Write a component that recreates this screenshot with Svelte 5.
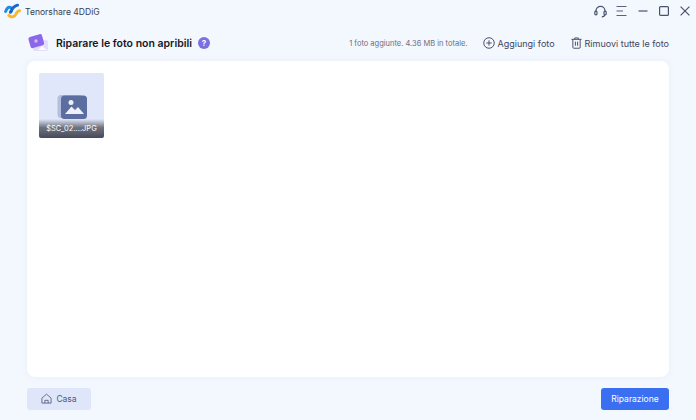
<script>
  let files = [{ name: "$SC_02....JPG" }];
</script>

<div class="window">
  <div class="titlebar">
    <div class="brand">
      <svg width="17" height="16" viewBox="0 0 17 16" fill="none">
        <path d="M1.6 8.5C2.7 5.5 4.5 3.8 6.4 4.4C8.6 5.1 8.2 8 6.4 9.3" stroke="#1f8be3" stroke-width="2.9" stroke-linecap="round"/>
        <path d="M6.6 8.8C8 5.6 10 3.2 13.6 2.2" stroke="#1667c8" stroke-width="2.9" stroke-linecap="round"/>
        <path d="M4.8 12.4C7.5 15 11 13.8 12.2 10.8C12.8 9.2 14 8 15.6 7.8" stroke="#f4b92c" stroke-width="2.9" stroke-linecap="round"/>
      </svg>
      <span class="app-name">Tenorshare 4DDiG</span>
    </div>
    <div class="controls">
      <svg class="headset" width="13" height="13" viewBox="0 0 13 13" fill="none" stroke="#4a5270" stroke-width="1.2">
        <path d="M2 7V5.8a4.5 4.5 0 0 1 9 0V7"/>
        <rect x="0.8" y="6.2" width="2.2" height="3.6" rx="1"/>
        <rect x="10" y="6.2" width="2.2" height="3.6" rx="1"/>
        <path d="M10.8 10C10.4 11.4 9.4 11.8 7.8 11.8"/>
      </svg>
      <svg width="11" height="12" viewBox="0 0 11 12" fill="none" stroke="#5a6280" stroke-width="1">
        <path d="M0.5 1.5H10.5M0.5 6H7M0.5 10.5H10.5"/>
      </svg>
      <svg width="10" height="12" viewBox="0 0 10 12" fill="none" stroke="#4a5270" stroke-width="1.2">
        <path d="M0.5 6H9.5"/>
      </svg>
      <svg width="10" height="12" viewBox="0 0 10 12" fill="none" stroke="#4a5270" stroke-width="1.2">
        <rect x="0.6" y="1.6" width="8.8" height="8.8" rx="1"/>
      </svg>
      <svg width="10" height="12" viewBox="0 0 10 12" fill="none" stroke="#4a5270" stroke-width="1.2">
        <path d="M0.6 1.6L9.4 10.4M9.4 1.6L0.6 10.4"/>
      </svg>
    </div>
  </div>

  <div class="toolbar">
    <div class="heading">
      <svg class="photo-icon" width="22" height="20" viewBox="0 0 22 20">
        <rect x="6" y="7" width="15" height="11" rx="2" fill="#e3dcfb"/>
        <rect x="2.5" y="2.5" width="14" height="11.5" rx="2" fill="#8b67e9" transform="rotate(-16 9 9)"/>
        <circle cx="9" cy="8" r="1.7" fill="#cdbdf9"/>
        <path d="M11 17L15 13L20 17Z" fill="#fff" opacity="0.9"/>
      </svg>
      <h1>Riparare le foto non apribili</h1>
      <span class="help">?</span>
    </div>
    <div class="actions">
      <span class="summary">1 foto aggiunte. 4.36 MB in totale.</span>
      <span class="action add">
        <svg width="12" height="12" viewBox="0 0 13 13" fill="none" stroke="#3f4660" stroke-width="1">
          <circle cx="6.5" cy="6.5" r="5.7"/>
          <path d="M6.5 3.6V9.4M3.6 6.5H9.4"/>
        </svg>
        Aggiungi foto
      </span>
      <span class="action">
        <svg width="11" height="12" viewBox="0 0 12 13" fill="none" stroke="#3f4660" stroke-width="1">
          <path d="M0.5 2.5H11.5M4 2.5V1H8V2.5"/>
          <path d="M2 2.5V11.2C2 11.8 2.4 12.2 3 12.2H9C9.6 12.2 10 11.8 10 11.2V2.5"/>
          <path d="M4.8 5V9.5M7.2 5V9.5"/>
        </svg>
        Rimuovi tutte le foto
      </span>
    </div>
  </div>

  <main class="card">
    {#each files as file}
      <div class="thumb">
        <div class="thumb-art">
          <svg width="30" height="25" viewBox="0 0 30 25">
            <rect x="0.5" y="1" width="25" height="23" rx="3.5" fill="#b4bedd"/>
            <rect x="4" y="1.5" width="26" height="23.5" rx="3.5" fill="#5c6da0"/>
            <circle cx="14" cy="8.5" r="2.5" fill="#eef1fb"/>
            <path d="M8 20L14.5 12.5L18 16L21 13L27 20Z" fill="#eef1fb"/>
          </svg>
        </div>
        <div class="thumb-label">{file.name}</div>
      </div>
    {/each}
  </main>

  <footer class="footer">
    <button class="home">
      <svg width="11" height="11" viewBox="0 0 12 12" fill="none" stroke="#4f5878" stroke-width="0.9">
        <path d="M1 5.6L6 1.2L11 5.6V11H1Z" stroke-linejoin="round"/>
        <path d="M4.2 11V8H7.8V11"/>
      </svg>
      Casa
    </button>
    <button class="repair">Riparazione</button>
  </footer>
</div>

<style>
  :global(body) {
    margin: 0;
    background: #f3f7fe;
  }

  .window {
    width: 696px;
    height: 420px;
    box-sizing: border-box;
    display: flex;
    flex-direction: column;
    padding: 0 27px;
    font-family: "Inter", "Liberation Sans", sans-serif;
    color: #3f4660;
    overflow: hidden;
  }

  .titlebar {
    height: 22px;
    margin: 0 -27px;
    padding: 0 6px 0 4px;
    display: flex;
    align-items: center;
    justify-content: space-between;
  }

  .brand {
    display: flex;
    align-items: center;
    gap: 4px;
    font-size: 8.6px;
    color: #3a4050;
  }

  .app-name {
    padding-top: 2px;
  }

  .controls {
    display: flex;
    align-items: center;
    gap: 11px;
  }

  .headset {
    margin-right: -2px;
  }

  .toolbar {
    height: 39px;
    padding-top: 3px;
    box-sizing: border-box;
    display: flex;
    align-items: center;
    justify-content: space-between;
  }

  .heading {
    display: flex;
    align-items: center;
  }

  .photo-icon {
    margin-right: 7px;
  }

  h1 {
    margin: 0;
    font-size: 10.5px;
    font-weight: 600;
    color: #15181f;
  }

  .help {
    width: 12px;
    height: 12px;
    margin-left: 6px;
    border-radius: 50%;
    background: #7c6fe0;
    color: #fff;
    font-size: 8px;
    font-weight: 700;
    display: flex;
    align-items: center;
    justify-content: center;
  }

  .actions {
    display: flex;
    align-items: center;
    font-size: 9px;
  }

  .summary {
    font-size: 7.5px;
    color: #6b7080;
    margin-right: 15px;
  }

  .action {
    display: flex;
    align-items: center;
    gap: 3px;
  }

  .add {
    margin-right: 16px;
  }

  .card {
    flex: 1;
    background: #fff;
    border-radius: 8px;
    padding: 12px;
    display: flex;
    align-items: flex-start;
    box-shadow: 0 0 6px rgba(120, 140, 190, 0.08);
  }

  .thumb {
    width: 65px;
    height: 65px;
    border-radius: 2px;
    overflow: hidden;
    background: #e1e7fa;
    position: relative;
  }

  .thumb-art {
    height: 100%;
    box-sizing: border-box;
    padding-top: 21px;
    display: flex;
    justify-content: center;
  }

  .thumb-label {
    position: absolute;
    left: 0;
    right: 0;
    bottom: 0;
    height: 19px;
    box-sizing: border-box;
    padding-top: 5px;
    text-align: center;
    font-size: 7.5px;
    color: #fff;
    background: linear-gradient(to bottom, rgba(225, 231, 250, 0.1), #70737f 45%, #46495a);
  }

  .footer {
    height: 43px;
    display: flex;
    align-items: center;
    justify-content: space-between;
  }

  button {
    border: none;
    height: 22px;
    border-radius: 3px;
    font-family: inherit;
    font-size: 8.5px;
  }

  .home {
    width: 64px;
    background: #dfe6fa;
    color: #4f5878;
    display: flex;
    align-items: center;
    justify-content: center;
    gap: 4px;
  }

  .repair {
    width: 68px;
    background: #3a6ff2;
    color: #fff;
  }
</style>
